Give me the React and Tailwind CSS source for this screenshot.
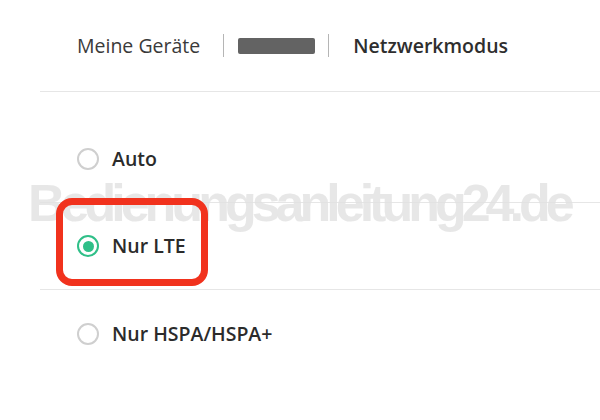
import React from 'react';

const options = [
  { label: 'Auto', checked: false },
  { label: 'Nur LTE', checked: true },
  { label: 'Nur HSPA/HSPA+', checked: false },
];

function Radio({ checked }) {
  if (checked) {
    return (
      <span className="flex h-[22px] w-[22px] items-center justify-center rounded-full border-[2.5px] border-[#2fbf88]">
        <span className="h-[11px] w-[11px] rounded-full bg-[#2fbf88]" />
      </span>
    );
  }
  return <span className="h-[22px] w-[22px] rounded-full border-2 border-[#cfcfcf]" />;
}

export default function App() {
  return (
    <main className="relative h-[420px] w-[600px] overflow-hidden bg-white font-['Open_Sans',sans-serif] text-[#333]">
      {/* breadcrumb */}
      <div className="ml-[40px] flex h-[92px] items-center border-b border-[#e6e6e6] pl-[37px]">
        <span className="text-[19.5px] text-[#3a3a3a]">Meine Geräte</span>
        <span className="ml-[23px] h-[23px] w-px bg-[#b5b5b5]" />
        <span className="ml-[14px] h-[16px] w-[77px] rounded-[2px] bg-[#636363] blur-[0.6px]" />
        <span className="ml-[13px] h-[23px] w-px bg-[#b5b5b5]" />
        <span className="ml-[24px] text-[19.5px] font-semibold text-[#2e2e2e]">Netzwerkmodus</span>
      </div>

      {/* network modes */}
      <div className="ml-[40px] pt-[24px]">
        {options.map((o) => (
          <div key={o.label} className="flex h-[87px] items-center gap-[13px] border-b border-[#e6e6e6] pl-[37px] last:border-b-0">
            <Radio checked={o.checked} />
            <span className="text-[19.5px] leading-[24px] font-semibold text-[#2b2b2b]">{o.label}</span>
          </div>
        ))}
      </div>

      {/* watermark */}
      <div className="pointer-events-none absolute left-[28px] top-[184px] font-['Liberation_Sans',sans-serif] text-[52px] font-bold leading-[38px] tracking-[-5px] text-[#e2e2e2] opacity-80">
        Bedienungsanleitung24.de
      </div>

      {/* highlight */}
      <div className="pointer-events-none absolute left-[56px] top-[198px] z-10 h-[88px] w-[152px] rounded-[16px] border-[7px] border-[#f1321d]" />
    </main>
  );
}
